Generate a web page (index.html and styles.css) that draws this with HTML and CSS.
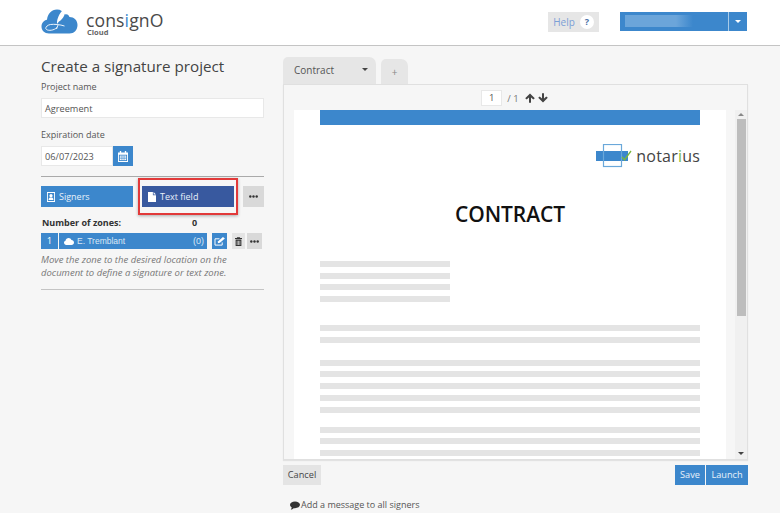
FILE: index.html
```html
<!DOCTYPE html>
<html lang="en">
<head>
<meta charset="utf-8">
<title>consignO Cloud</title>
<link rel="stylesheet" href="styles.css">
</head>
<body>
<header class="topbar">
  <div class="brand">
    <svg class="brand-icon" width="37" height="26" viewBox="0 0 37 26">
      <path fill="#3c87cc" d="M8 25.500C3.500 25.500.5 22.500.5 18.500.5 15 3 12.500 6 11.800 6.500 6 10.500 1.500 16 1.500c3.500 0 6.500 2 8 5 1.500-.5 3.500-.2 4.500 2.500 4.500 0 8 3 8 8 0 5-3.500 8.500-8 8.500Z"/>
      <path fill="none" stroke="#fff" stroke-width=".9" d="M16 19.500c-3 3-8.500 3.500-10.500 2s.5-4.500 4-5 9.500 0 14 1.500M15.500 21c.5-1.500 1-2.500 1.500-4"/>
      <path fill="#fff" d="M16 14c.5-5 3.500-11 8.500-14 .5 5-2 11-6.500 13.500l-2 2.500Z"/>
    </svg>
    <div class="brand-text">
      <div class="brand-name">cons<span class="brand-i">i</span>gnO</div>
      <div class="brand-sub">Cloud</div>
    </div>
  </div>
  <div class="top-actions">
    <button class="help-btn">Help <span class="help-q">?</span></button>
    <div class="user-menu">
      <div class="user-name"><span class="user-blur"></span></div>
      <div class="user-caret"><span class="caret caret-white"></span></div>
    </div>
  </div>
</header>

<main class="content">
  <section class="side">
    <h1 class="title">Create a signature project</h1>
    <label class="label">Project name</label>
    <div class="input input-full">Agreement</div>
    <label class="label label-exp">Expiration date</label>
    <div class="date-row">
      <div class="input input-date">06/07/2023</div>
      <button class="cal-btn" aria-label="Calendar">
        <svg width="10" height="11" viewBox="0 0 11 12"><path fill="#fff" d="M2 0h1.500v1.500h4V0H9v1.500h2V12H0V1.500h2ZM1 4v7h9V4Z"/><path fill="#fff" d="M2 5h7v5H2Z"/><path stroke="#3c87cc" stroke-width=".6" d="M2 6.600h7M2 8.300h7M4.300 5v5M6.700 5v5"/></svg>
      </button>
    </div>
    <hr class="rule rule-top">
    <div class="tool-row">
      <button class="tool tool-signers">
        <svg width="8" height="10" viewBox="0 0 9 11"><path fill="#fff" fill-rule="evenodd" d="M0 0h9v11H0ZM1 1v9h7V1Z"/><circle fill="#fff" cx="4.500" cy="4" r="1.800"/><path fill="#fff" d="M1.800 9c0-2.500 1-3 2.700-3s2.700.5 2.700 3Z"/></svg>
        Signers
      </button>
      <div class="highlight">
        <button class="tool tool-text">
          <svg width="8" height="10" viewBox="0 0 9 11"><path fill="#fff" d="M0 0h5.500v3.500H9V11H0ZM6.300 0 9 2.700H6.300Z"/></svg>
          Text field
        </button>
      </div>
      <button class="more more-lg" aria-label="More">
        <svg class="dots" width="9" height="3" viewBox="0 0 9 3"><circle cx="1.300" cy="1.500" r="1.200"/><circle cx="4.500" cy="1.500" r="1.200"/><circle cx="7.700" cy="1.500" r="1.200"/></svg>
      </button>
    </div>
    <div class="zones-head"><span>Number of zones:</span><span class="zones-count">0</span></div>
    <div class="signer-row">
      <div class="signer-num">1</div>
      <div class="signer-name">
        <svg width="10" height="7" viewBox="0 0 13 9"><path fill="#fff" d="M3 9C1.300 9 0 7.800 0 6.200c0-1.300.8-2.300 2-2.700C2.300 1.500 4 0 6 0c1.700 0 3.100 1 3.700 2.500C11.500 2.600 13 4 13 5.800 13 7.600 11.600 9 9.800 9Z"/></svg>
        <span class="signer-text">E. Tremblant</span>
        <span class="signer-zero">(0)</span>
      </div>
      <button class="icon-btn icon-edit" aria-label="Edit">
        <svg width="11" height="9" viewBox="0 0 12 10"><path fill="none" stroke="#fff" stroke-width="1.100" d="M9 6v3H1V2h5"/><path fill="#fff" d="M4 7l.5-2.300L9.800 0 12 1.800 6.500 6.500Z"/></svg>
      </button>
      <button class="icon-btn icon-trash" aria-label="Delete">
        <svg width="7" height="9" viewBox="0 0 8 10"><path fill="#333" d="M2.500 0h3l.5 1h2v1H0V1h2ZM.7 2.800h6.600V10H.7ZM2 4v5h.8V4Zm1.600 0v5h.8V4Zm1.600 0v5H6V4Z"/></svg>
      </button>
      <button class="icon-btn more-sm" aria-label="More">
        <svg class="dots" width="9" height="3" viewBox="0 0 9 3"><circle cx="1.300" cy="1.500" r="1.200"/><circle cx="4.500" cy="1.500" r="1.200"/><circle cx="7.700" cy="1.500" r="1.200"/></svg>
      </button>
    </div>
    <p class="hint">Move the zone to the desired location on the document to define a signature or text zone.</p>
    <hr class="rule rule-bottom">
  </section>

  <section class="doc">
    <div class="tabs">
      <div class="tab tab-main">Contract <span class="caret caret-dark"></span></div>
      <div class="tab tab-add">+</div>
    </div>
    <div class="viewer">
      <div class="pager">
        <span class="page-input">1</span>
        <span class="page-total">/ 1</span>
        <svg width="10" height="10" viewBox="0 0 10 10"><path fill="#444" d="M5 .5 9.800 5.300 8.300 6.600 6 4.400V9.800H4V4.400L1.700 6.600.2 5.300Z"/></svg>
        <svg width="10" height="10" viewBox="0 0 10 10"><path fill="#444" d="M5 9.500 9.800 4.700 8.300 3.400 6 5.600V.2H4V5.600L1.700 3.400.2 4.700Z"/></svg>
      </div>
      <div class="doc-body">
        <div class="page">
          <div class="page-bar"></div>
          <div class="page-logo">
            <svg width="36" height="24" viewBox="0 0 36 24">
              <rect x="0" y="7" width="32" height="10" fill="#3c87cc"/>
              <rect x="7.500" y=".5" width="18" height="22" fill="none" stroke="#6aa8da" stroke-width="1.200"/>
              <path fill="none" stroke="#7ab83c" stroke-width="1.300" d="M26 13l2.500 3L35 7"/>
            </svg>
            <span class="logo-word">notar<span class="logo-i">i</span>us</span>
          </div>
          <h2 class="page-title">CONTRACT</h2>
          <div class="lines lines-short">
            <i></i><i></i><i></i><i></i>
          </div>
          <div class="lines lines-a"><i></i><i></i></div>
          <div class="lines lines-b"><i></i><i></i><i></i><i></i><i></i></div>
          <div class="lines lines-c"><i></i><i></i><i></i></div>
        </div>
        <div class="scrollbar">
          <span class="arrow arrow-up"></span>
          <div class="thumb"></div>
          <span class="arrow arrow-down"></span>
        </div>
      </div>
    </div>
    <div class="actions">
      <button class="btn btn-cancel">Cancel</button>
      <div class="actions-right">
        <button class="btn btn-blue">Save</button>
        <button class="btn btn-blue">Launch</button>
      </div>
    </div>
    <div class="message">
      <svg width="10" height="9" viewBox="0 0 11 9"><path fill="#333" d="M5.500 0C8.500 0 11 1.600 11 3.800S8.500 7.500 5.500 7.500c-.5 0-1 0-1.500-.1C3.200 8.300 2 8.900.8 9c.6-.7 1-1.500 1.100-2.300C.7 6 0 5 0 3.800 0 1.600 2.500 0 5.500 0Z"/></svg>
      Add a message to all signers
    </div>
  </section>
</main>
</body>
</html>
```

FILE: styles.css
```css
* { box-sizing: border-box; }
html, body { margin: 0; height: 513px; overflow: hidden; }
body {
  background: #f6f6f6;
  color: #555;
  font-family: "Open Sans", "Liberation Sans", sans-serif;
  font-size: 11px;
}
button { font-family: inherit; border: 0; padding: 0; margin: 0; }

.topbar {
  height: 46px;
  background: #fff;
  border-bottom: 1px solid #c4c4c4;
  display: flex;
  justify-content: space-between;
  padding: 8px 33px 0 41px;
}
.brand { display: flex; align-items: flex-start; gap: 8px; }
.brand-text { margin-top: 4px; }
.brand-name { font-size: 17.600px; line-height: 17px; color: #4a4a4a; letter-spacing: .1px; }
.brand-i { color: #3c87cc; }
.brand-sub { font-size: 7.500px; line-height: 6px; font-weight: 700; color: #666; padding-left: 1px; }

.top-actions { display: flex; align-items: flex-start; gap: 21px; padding-top: 4px; }
.help-btn {
  width: 51px; height: 20px; background: #e6e6e6; color: #7b9fd6;
  font-size: 10px; display: flex; align-items: center; justify-content: center; gap: 5px;
}
.help-q {
  width: 14px; height: 14px; border-radius: 50%; background: #fff; color: #4a6fa5;
  font-size: 9px; font-weight: 700; line-height: 14px; text-align: center;
}
.user-menu { display: flex; width: 127px; height: 19px; }
.user-name { flex: 1; background: #3c87cc; border-right: 1px solid #a8cbe8; padding: 3px 5px; }
.user-blur {
  display: block; width: 68px; height: 12px;
  background: linear-gradient(to right, #6ba5da 75%, #3c87cc);
}
.user-caret { width: 18px; background: #3c87cc; display: flex; align-items: center; justify-content: center; }
.caret { display: inline-block; width: 0; height: 0; border-left: 3.500px solid transparent; border-right: 3.500px solid transparent; }
.caret-white { border-top: 3.500px solid #fff; }
.caret-dark { border-top: 3px solid #444; }

.content { display: flex; padding: 0 32px 0 41px; gap: 19px; }
.side { width: 223px; flex: none; padding-top: 10px; }
.title { margin: 0; font-size: 15.200px; line-height: 21px; font-weight: 400; color: #444; }
.label { display: block; font-size: 9px; line-height: 14px; color: #555; margin-top: 3px; }
.label-exp { margin-top: 10px; }
.input {
  background: #fff; border: 1px solid #e8e8e8; height: 20px; padding: 0 3px;
  font-size: 9.200px; line-height: 19px; color: #555; margin-top: 4px;
}
.input-full { width: 223px; }
.date-row { display: flex; align-items: flex-start; }
.input-date { width: 72px; }
.cal-btn {
  width: 20px; height: 20px; background: #3c87cc; margin-top: 4px;
  display: flex; align-items: center; justify-content: center;
}
.rule { border: 0; margin: 0; }
.rule-top { border-top: 1px solid #aaa; margin-top: 10px; }
.rule-bottom { border-top: 1px solid #c4c4c4; margin-top: 10px; }

.tool-row { display: flex; align-items: flex-start; margin-top: 9px; }
.tool {
  width: 92px; height: 21px; color: #e8f1fa; font-size: 9px; display: flex;
  align-items: center; gap: 4px; padding-left: 6px; flex: none;
}
.tool-signers { background: #3c87cc; }
.tool-text { background: #38599f; }
.highlight {
  margin: -8px 5px 0 5px; padding: 6px 2px 0; border: 2px solid #e23a3a;
  box-shadow: 0 1px 3px rgba(0,0,0,.3);
  width: 100px; height: 37px; flex: none;
}
.more { background: #d9d9d9; display: flex; align-items: center; justify-content: center; }
.more-lg { width: 21px; height: 21px; }
.dots { fill: #333; }

.zones-head {
  display: flex; font-size: 9px; font-weight: 700; color: #333; line-height: 14px;
  padding-left: 1px; margin-top: 1px;
}
.zones-head span:first-child { width: 150px; }
.signer-row { display: flex; align-items: stretch; height: 16px; margin-top: 3px; }
.signer-num {
  width: 17px; background: #3c87cc; color: #fff; font-size: 9.500px; line-height: 16px; text-align: center;
}
.signer-name {
  width: 148px; margin-left: 1px; background: #3c87cc; color: #dbe8f5;
  display: flex; align-items: center; padding: 0 3px 0 5px;
  font-family: "Liberation Sans", sans-serif; font-size: 8.500px;
}
.signer-text { margin-left: 3px; flex: 1; }
.signer-zero { font-size: 9px; }
.icon-btn { width: 15px; display: flex; align-items: center; justify-content: center; }
.icon-edit { background: #3c87cc; margin-left: 5px; }
.icon-trash { background: #e4e4e4; width: 13px; margin-left: 5px; }
.more-sm { background: #d9d9d9; margin-left: 2px; }
.hint { margin: 4px 0 0; font-size: 9.500px; line-height: 13px; font-style: italic; color: #777; }

.doc { width: 465px; flex: none; padding-top: 11px; }
.tabs { display: flex; align-items: flex-end; height: 27px; gap: 5px; }
.tab { background: #e6e6e6; color: #555; border-radius: 5px 7px 0 0; }
.tab-main {
  width: 93px; height: 27px; font-size: 10px; line-height: 26px; padding: 0 8px 2px 11px;
  display: flex; align-items: center; justify-content: space-between;
}
.tab-add { width: 27px; height: 25px; font-size: 10px; line-height: 26px; text-align: center; color: #888; }

.viewer {
  width: 465px; height: 376px; border: 1px solid #e0e0e0;
  box-shadow: 0 1px 1px rgba(0,0,0,.08);
  padding-left: 10px;
}
.pager { height: 25px; display: flex; align-items: center; justify-content: center; gap: 3px; padding-right: 12px; padding-top: 1px; }
.page-input {
  width: 21px; height: 16px; background: #fff; border: 1px solid #e8e8e8;
  font-size: 9.500px; line-height: 14px; text-align: center; color: #555;
}
.page-total { font-size: 9.500px; color: #777; margin: 0 3px 0 2px; }
.doc-body { display: flex; height: 349px; overflow: hidden; }
.page { width: 432px; background: #fff; padding: 0 26px; }
.page-bar { height: 15px; background: #3c87cc; }
.page-logo { display: flex; align-items: center; gap: 4px; justify-content: flex-end; margin-top: 19px; height: 24px; }
.page-logo svg { flex: none; }
.logo-word { font-size: 16px; color: #444; letter-spacing: .2px; line-height: 20px; }
.logo-i { color: #7ab83c; }
.page-title { margin: 31px 0 0; height: 30px; font-size: 21px; line-height: 30px; font-weight: 600; color: #111; text-align: center; letter-spacing: -.1px; }
.lines { display: flex; flex-direction: column; gap: 5.700px; }
.lines i { display: block; height: 6px; background: #e4e4e4; }
.lines-short { width: 130px; margin-top: 32px; }
.lines-a { margin-top: 23px; }
.lines-b { margin-top: 17px; }
.lines-c { margin-top: 14px; }
.scrollbar {
  width: 12px; margin-left: 9px; background: #f0f0f0;
  display: flex; flex-direction: column; align-items: center; padding-top: 3px;
}
.thumb { width: 9px; height: 197px; background: #bdbdbd; margin-top: 3px; }
.arrow { width: 0; height: 0; border-left: 3px solid transparent; border-right: 3px solid transparent; }
.arrow-up { border-bottom: 3px solid #888; }
.arrow-down { border-top: 3px solid #444; margin-top: auto; margin-bottom: 4px; }

.actions { display: flex; justify-content: space-between; margin-top: 5px; }
.btn { height: 20px; font-size: 9.200px; padding-bottom: 1px; }
.btn-cancel { width: 38px; background: #e4e4e4; color: #444; }
.actions-right { display: flex; gap: 1px; }
.btn-blue { background: #3c87cc; color: #e8f1fa; }
.btn-blue:first-child { width: 30px; }
.btn-blue:last-child { width: 42px; }
.message { margin: 13px 0 0 7px; font-size: 9px; line-height: 14px; color: #555; display: flex; align-items: center; gap: 1px; }
```
